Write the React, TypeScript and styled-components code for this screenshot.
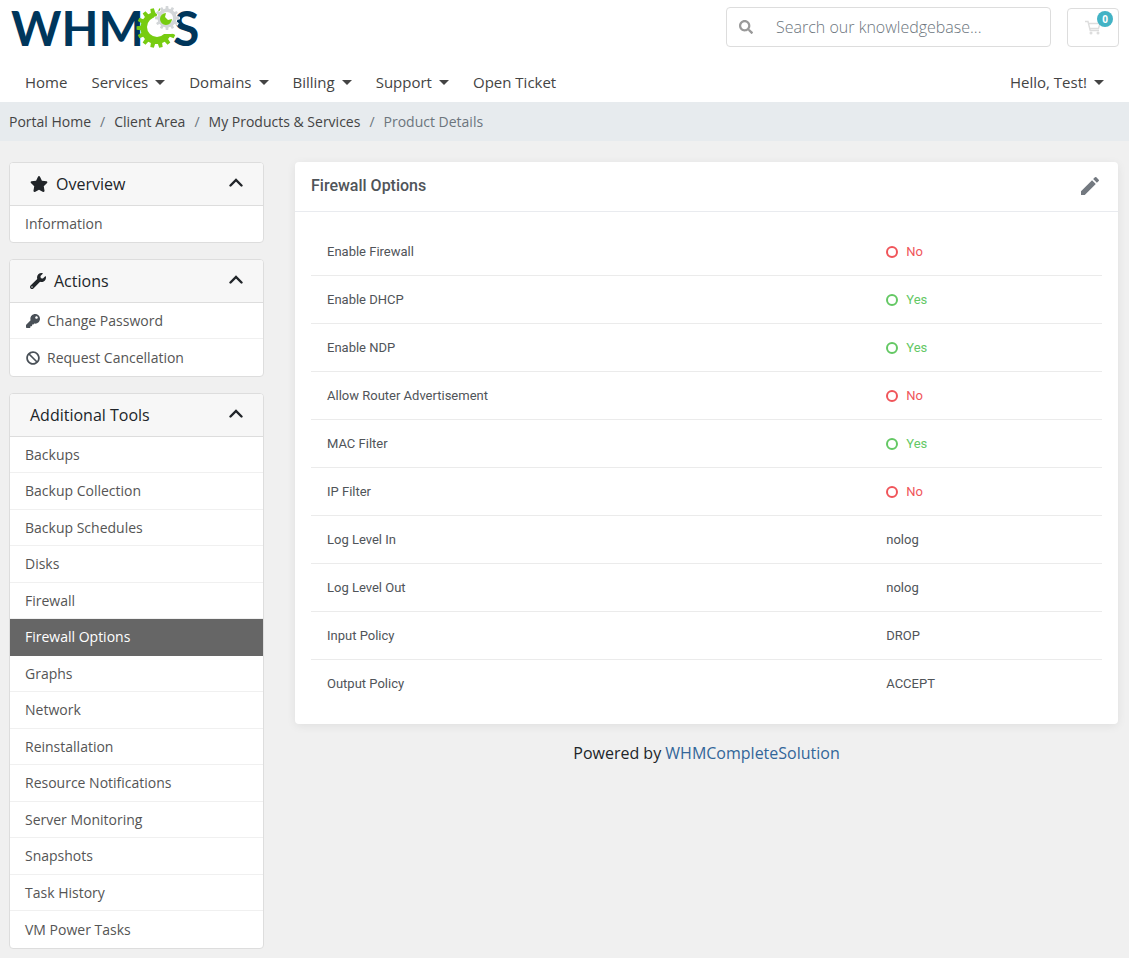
import React from 'react';
import styled, { createGlobalStyle, css } from 'styled-components';
import { FaStar, FaWrench, FaKey, FaBan, FaSearch } from 'react-icons/fa';
import { MdEdit } from 'react-icons/md';

const GlobalStyle = createGlobalStyle`
  *, *::before, *::after { box-sizing: border-box; }
  body {
    margin: 0;
    background: #f0f0f0;
    color: #212529;
    font: 400 16px/24px 'Open Sans', sans-serif;
  }
  a { color: inherit; text-decoration: none; }
  ul, ol { list-style: none; margin: 0; padding: 0; }
  button { font: inherit; color: inherit; background: none; border: 0; padding: 0; cursor: pointer; }
`;

const Header = styled.header`
  background: #fff;
`;

const TopBar = styled.div`
  display: flex;
  align-items: flex-start;
  gap: 16px;
  padding: 0 10px 0 8px;
`;

const LogoLink = styled.a`
  display: block;
  margin-right: auto;
  line-height: 0;
  svg { overflow: visible; }
`;

const SearchForm = styled.form`
  display: flex;
  align-items: center;
  width: 325px;
  height: 40px;
  margin-top: 7px;
  border: 1px solid #ddd;
  border-radius: 4px;
`;

const SearchButton = styled.button`
  display: flex;
  padding: 0 12px;
  color: #999;
  font-size: 14px;
`;

const SearchInput = styled.input`
  flex: 1;
  min-width: 0;
  border: 0;
  outline: 0;
  background: none;
  padding: 0 11px;
  color: #495057;
  font: 300 16px/24px 'Open Sans', sans-serif;
  &::placeholder { color: #6c757d; opacity: 1; }
`;

const CartLink = styled.a`
  position: relative;
  display: flex;
  align-items: center;
  justify-content: center;
  width: 52px;
  height: 39px;
  margin-top: 8px;
  border: 1px solid #ddd;
  border-radius: 4px;
  color: #ddd;
`;

const CartBadge = styled.span`
  position: absolute;
  top: 2px;
  right: 5px;
  width: 16px;
  height: 16px;
  border-radius: 8px;
  background: #42b3c5;
  color: #fff;
  font-size: 10px;
  font-weight: 700;
  line-height: 16px;
  text-align: center;
`;

const Nav = styled.nav`
  display: flex;
  justify-content: space-between;
  padding: 7px 13px 0;
`;

const NavList = styled.ul`
  display: flex;
`;

const NavLink = styled.a`
  display: flex;
  align-items: center;
  gap: 7px;
  padding: 8px 12px;
  color: #444;
  font-size: 15px;
  line-height: 23px;
`;

const Caret = styled.span`
  border: 5px solid transparent;
  border-top-color: currentColor;
  border-bottom: 0;
`;

const Breadcrumb = styled.ol`
  display: flex;
  padding: 8px 9px;
  background: #e7ebee;
  color: #6c757d;
  font-size: 14px;
  line-height: 23px;
  li + li::before { content: '/'; padding: 0 9px; }
  a { color: #444; }
`;

const Body = styled.div`
  display: flex;
  align-items: flex-start;
  gap: 31px;
  padding: 21px 11px 9px 9px;
`;

const Sidebar = styled.aside`
  display: flex;
  flex-direction: column;
  gap: 16px;
  flex: 0 0 255px;
`;

const Panel = styled.section`
  background: #fff;
  border: 1px solid #ddd;
  border-radius: 4px;
  overflow: hidden;
`;

const PanelTitle = styled.h3`
  margin: 0;
  font: inherit;
`;

const PanelToggle = styled.button`
  display: flex;
  align-items: center;
  gap: 8px;
  width: 100%;
  height: 43px;
  padding: 0 20px;
  background: #f7f7f7;
  border-bottom: 1px solid #ddd;
  text-align: left;
`;

const PanelName = styled.span`
  flex: 1;
`;

const Chevron = styled.svg`
  margin-bottom: 4px;
  fill: none;
  stroke: currentColor;
  stroke-width: 2.4;
  stroke-linecap: round;
`;

const PanelItem = styled.li`
  &:nth-child(even) > a { height: 37px; }
`;

const PanelLink = styled.a<{ $active?: boolean }>`
  display: flex;
  align-items: center;
  gap: 6px;
  height: 36px;
  padding: 0 15px;
  border-bottom: 1px solid #f0f0f0;
  color: #555;
  font-size: 14px;
  ${PanelItem}:last-child > & { border-bottom: 0; }
  ${(p) => p.$active && css`
    background: #666;
    border-color: #666;
    color: #fff;
    font-weight: 500;
  `}
`;

const ItemIcon = styled.span`
  display: flex;
  justify-content: center;
  width: 16px;
  color: #495057;
`;

const Main = styled.main`
  flex: 1;
  min-width: 0;
`;

const Card = styled.section`
  background: #fff;
  border-radius: 4px;
  box-shadow: 0 2px 10px rgba(0, 0, 0, 0.07);
  color: #505459;
  font-family: Roboto, sans-serif;
`;

const CardHeader = styled.div`
  display: flex;
  align-items: center;
  justify-content: space-between;
  height: 50px;
  padding: 0 16px 2px;
  border-bottom: 1px solid #e9ebef;
`;

const CardTitle = styled.h2`
  margin: 0;
  font-size: 16px;
  font-weight: 500;
  line-height: 24px;
`;

const EditButton = styled.button`
  display: flex;
  color: #737980;
  font-size: 24px;
`;

const CardBody = styled.div`
  padding: 16px;
`;

const OptionsTable = styled.table`
  width: 100%;
  table-layout: fixed;
  border-collapse: separate;
  border-spacing: 0;
  font-size: 13px;
  line-height: 20px;
`;

const OptionRow = styled.tr`
  th, td {
    height: 48px;
    padding: 0 16px;
    border-bottom: 1px solid #ebebeb;
    font-weight: 400;
    text-align: left;
  }
  th { width: 70.7%; }
  &:last-child > * { border-bottom: 0; }
`;

const Status = styled.span<{ $on: boolean }>`
  display: flex;
  align-items: center;
  gap: 8px;
  color: ${(p) => (p.$on ? '#64c864' : '#f0555a')};
  &::before {
    content: '';
    width: 12px;
    height: 12px;
    border: 2px solid;
    border-radius: 50%;
  }
`;

const Credit = styled.p`
  margin: 17px 0 0;
  text-align: center;
  a { color: #336699; }
`;

const gear = (cx: number, cy: number, outer: number, inner: number, teeth: number) => {
  const step = (Math.PI * 2) / teeth;
  const at = (r: number, a: number) => `${(cx + r * Math.cos(a)).toFixed(2)} ${(cy + r * Math.sin(a)).toFixed(2)}`;
  let d = '';
  for (let i = 0; i < teeth; i++) {
    const a = i * step;
    d += `${i ? 'L' : 'M'}${at(inner, a - step * 0.3)}L${at(outer, a - step * 0.2)}L${at(outer, a + step * 0.2)}L${at(inner, a + step * 0.3)}`;
  }
  return d + 'Z';
};

const Wordmark = styled.text`
  fill: #00365b;
  font: 700 48px Lato, sans-serif;
`;

const Logo = () => (
  <svg width="192" height="56" viewBox="8 0 192 56" role="img" aria-label="WHMCS">
    <Wordmark x="11" y="46">WHM</Wordmark>
    <path d={gear(156.5, 28, 20, 16, 14)} fill="#77cc11" />
    <circle cx="157" cy="27" r="10" fill="#fff" />
    <path d="M158 22L182 8V32L171 34L164 34Z" fill="#fff" />
    <Wordmark x="173" y="46">S</Wordmark>
    <path d={gear(167, 18, 13, 10.5, 12)} fill="#fff" />
    <path d={gear(167, 18, 12, 9.5, 12)} fill="#d3d6d8" />
    <circle cx="167" cy="18" r="6" fill="#fff" />
    <path d="M166 13A6 6 0 1 0 172 19L168 20L165 17Z" fill="#77cc11" />
  </svg>
);

const CartIcon = () => (
  <svg width="16" height="15" viewBox="0 0 16 15" fill="none" stroke="currentColor" aria-hidden="true">
    <path d="M0 1.5H3L5.2 10.5H14M3.5 3.5H15L13.5 8.5H5" strokeWidth="1.4" />
    <circle cx="6" cy="13" r="1.5" fill="currentColor" stroke="none" />
    <circle cx="13" cy="13" r="1.5" fill="currentColor" stroke="none" />
  </svg>
);

const navItems = [
  { label: 'Home' },
  { label: 'Services', menu: true },
  { label: 'Domains', menu: true },
  { label: 'Billing', menu: true },
  { label: 'Support', menu: true },
  { label: 'Open Ticket' },
];

type Item = { label: string; icon?: React.ReactNode; active?: boolean };
const panels: { title: string; icon?: React.ReactNode; items: Item[] }[] = [
  { title: 'Overview', icon: <FaStar size={18} />, items: [{ label: 'Information' }] },
  {
    title: 'Actions',
    icon: <FaWrench size={16} />,
    items: [
      { label: 'Change Password', icon: <FaKey size={14} /> },
      { label: 'Request Cancellation', icon: <FaBan size={14} /> },
    ],
  },
  {
    title: 'Additional Tools',
    items: [
      { label: 'Backups' },
      { label: 'Backup Collection' },
      { label: 'Backup Schedules' },
      { label: 'Disks' },
      { label: 'Firewall' },
      { label: 'Firewall Options', active: true },
      { label: 'Graphs' },
      { label: 'Network' },
      { label: 'Reinstallation' },
      { label: 'Resource Notifications' },
      { label: 'Server Monitoring' },
      { label: 'Snapshots' },
      { label: 'Task History' },
      { label: 'VM Power Tasks' },
    ],
  },
];

const options: [string, string | boolean][] = [
  ['Enable Firewall', false],
  ['Enable DHCP', true],
  ['Enable NDP', true],
  ['Allow Router Advertisement', false],
  ['MAC Filter', true],
  ['IP Filter', false],
  ['Log Level In', 'nolog'],
  ['Log Level Out', 'nolog'],
  ['Input Policy', 'DROP'],
  ['Output Policy', 'ACCEPT'],
];

export default function App() {
  return (
    <>
      <GlobalStyle />
      <Header>
        <TopBar>
          <LogoLink href="#"><Logo /></LogoLink>
          <SearchForm>
            <SearchButton type="submit" aria-label="Search"><FaSearch /></SearchButton>
            <SearchInput type="text" aria-label="Search our knowledgebase" placeholder="Search our knowledgebase..." />
          </SearchForm>
          <CartLink href="#" aria-label="Shopping cart">
            <CartIcon />
            <CartBadge>0</CartBadge>
          </CartLink>
        </TopBar>
        <Nav>
          <NavList>
            {navItems.map((n) => (
              <li key={n.label}><NavLink href="#">{n.label}{n.menu && <Caret />}</NavLink></li>
            ))}
          </NavList>
          <NavList>
            <li><NavLink href="#">Hello, Test!<Caret /></NavLink></li>
          </NavList>
        </Nav>
      </Header>
      <Breadcrumb>
        <li><a href="#">Portal Home</a></li>
        <li><a href="#">Client Area</a></li>
        <li><a href="#">My Products &amp; Services</a></li>
        <li>Product Details</li>
      </Breadcrumb>
      <Body>
        <Sidebar>
          {panels.map((p) => (
            <Panel key={p.title}>
              <PanelTitle>
                <PanelToggle type="button" aria-expanded="true">
                  {p.icon}
                  <PanelName>{p.title}</PanelName>
                  <Chevron width="14" height="9" viewBox="0 0 14 9" aria-hidden="true">
                    <path d="M1.5 7.5L7 2L12.5 7.5" />
                  </Chevron>
                </PanelToggle>
              </PanelTitle>
              <ul>
                {p.items.map((i) => (
                  <PanelItem key={i.label}>
                    <PanelLink href="#" $active={i.active}>
                      {i.icon && <ItemIcon>{i.icon}</ItemIcon>}
                      {i.label}
                    </PanelLink>
                  </PanelItem>
                ))}
              </ul>
            </Panel>
          ))}
        </Sidebar>
        <Main>
          <Card>
            <CardHeader>
              <CardTitle>Firewall Options</CardTitle>
              <EditButton type="button" aria-label="Edit"><MdEdit /></EditButton>
            </CardHeader>
            <CardBody>
              <OptionsTable>
                <tbody>
                  {options.map(([label, value]) => (
                    <OptionRow key={label}>
                      <th scope="row">{label}</th>
                      <td>
                        {typeof value === 'boolean'
                          ? <Status $on={value}>{value ? 'Yes' : 'No'}</Status>
                          : value}
                      </td>
                    </OptionRow>
                  ))}
                </tbody>
              </OptionsTable>
            </CardBody>
          </Card>
          <Credit>Powered by <a href="#">WHMCompleteSolution</a></Credit>
        </Main>
      </Body>
    </>
  );
}
